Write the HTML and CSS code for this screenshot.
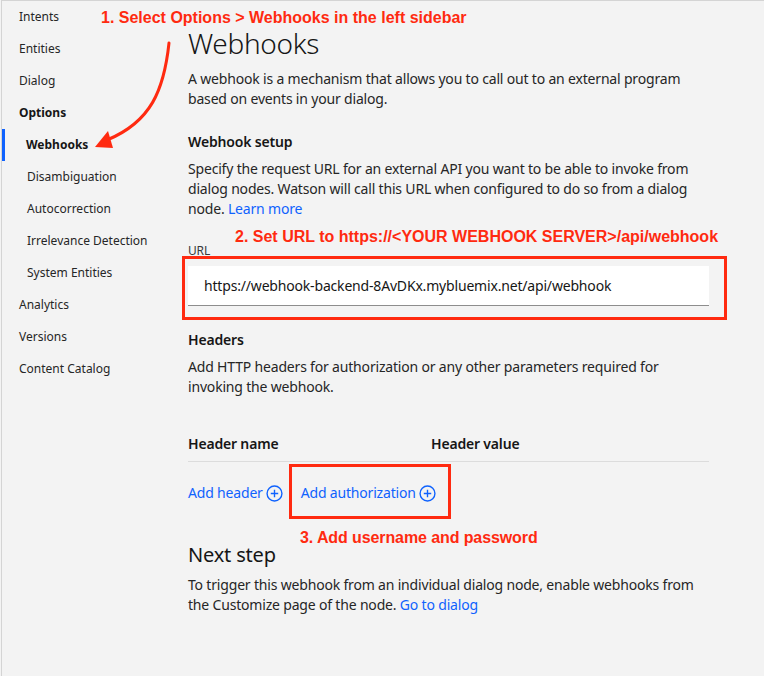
FILE: index.html
```html
<!DOCTYPE html>
<html lang="en">
<head>
<meta charset="utf-8">
<title>Webhooks</title>
<link rel="stylesheet" href="styles.css">
</head>
<body>
<div class="page">
  <nav class="sidebar">
    <div class="nav-item">Intents</div>
    <div class="nav-item">Entities</div>
    <div class="nav-item">Dialog</div>
    <div class="nav-item nav-bold">Options</div>
    <div class="nav-item nav-sub nav-active">Webhooks</div>
    <div class="nav-item nav-sub">Disambiguation</div>
    <div class="nav-item nav-sub">Autocorrection</div>
    <div class="nav-item nav-sub">Irrelevance Detection</div>
    <div class="nav-item nav-sub">System Entities</div>
    <div class="nav-item">Analytics</div>
    <div class="nav-item">Versions</div>
    <div class="nav-item">Content Catalog</div>
  </nav>
  <main class="main">
    <h1 class="title">Webhooks</h1>
    <p class="text intro">A webhook is a mechanism that allows you to call out to an external program<br>based on events in your dialog.</p>
    <h2 class="subhead setup-head">Webhook setup</h2>
    <p class="text">Specify the request URL for an external API you want to be able to invoke from<br>dialog nodes. Watson will call this URL when configured to do so from a dialog<br>node. <a class="link">Learn more</a></p>
    <label class="label">URL</label>
    <div class="input">https://webhook-backend-8AvDKx.mybluemix.net/api/webhook</div>
    <h2 class="subhead headers-head">Headers</h2>
    <p class="text">Add HTTP headers for authorization or any other parameters required for<br>invoking the webhook.</p>
    <div class="table-head">
      <span class="col-name">Header name</span>
      <span class="col-value">Header value</span>
    </div>
    <div class="actions">
      <a class="link action">Add header <svg class="plus" viewBox="0 0 16 16"><circle cx="8" cy="8" r="7" fill="none" stroke="currentColor" stroke-width="1.3"/><path d="M8 4.5v7M4.5 8h7" stroke="currentColor" stroke-width="1.3"/></svg></a>
      <a class="link action">Add authorization <svg class="plus" viewBox="0 0 16 16"><circle cx="8" cy="8" r="7" fill="none" stroke="currentColor" stroke-width="1.3"/><path d="M8 4.5v7M4.5 8h7" stroke="currentColor" stroke-width="1.3"/></svg></a>
    </div>
    <h2 class="next-head">Next step</h2>
    <p class="text next-text">To trigger this webhook from an individual dialog node, enable webhooks from<br>the Customize page of the node. <a class="link">Go to dialog</a></p>
  </main>

  <div class="note note-1">1. Select Options &gt; Webhooks in the left sidebar</div>
  <div class="note note-2">2. Set URL to https://&lt;YOUR WEBHOOK SERVER&gt;/api/webhook</div>
  <div class="note note-3">3. Add username and password</div>
  <div class="box box-url"></div>
  <div class="box box-auth"></div>
  <svg class="arrow" width="200" height="160" viewBox="0 0 200 160">
    <path d="M168 43 C163 90 150 122 106 140" fill="none" stroke="#ff2a10" stroke-width="3" stroke-linecap="round"/>
    <polygon points="94,147 107,131 112,148" fill="#ff2a10"/>
  </svg>
</div>
</body>
</html>
```

FILE: styles.css
```css
* { box-sizing: border-box; }
html, body { margin: 0; padding: 0; }
body {
  background: #f3f3f3;
  font-family: "Noto Sans", "Open Sans", sans-serif;
  color: #161616;
}
.page {
  position: relative;
  display: flex;
  width: 764px;
  height: 676px;
  border-top: 1px solid #d4d4d4;
  border-left: 1px solid #d4d4d4;
  margin-left: 1px;
  overflow: hidden;
}
.sidebar {
  width: 186px;
  flex: none;
}
.nav-item {
  height: 32px;
  line-height: 32px;
  font-size: 12px;
  padding-left: 17px;
  color: #262626;
}
.nav-bold { font-weight: 700; color: #161616; }
.nav-sub { padding-left: 25px; }
.nav-active {
  font-weight: 700;
  color: #161616;
  border-left: 3px solid #0f62fe;
  padding-left: 21px;
}
.main {
  flex: none;
  width: 540px;
  padding-top: 24px;
  letter-spacing: -0.18px;
}
.title {
  margin: 0;
  font-size: 28px;
  line-height: 36px;
  font-weight: 300;
  letter-spacing: -0.3px;
}
.text {
  margin: 0;
  font-size: 14px;
  line-height: 20px;
  color: #262626;
}
.intro { margin-top: 8px; }
.subhead {
  margin: 0;
  font-size: 14px;
  line-height: 20px;
  font-weight: 600;
}
.setup-head { margin-top: 23px; margin-bottom: 7px; }
.headers-head { margin-top: 24px; margin-bottom: 7px; }
.link { color: #0f62fe; text-decoration: none; }
.label {
  display: block;
  margin-top: 24px;
  font-size: 12px;
  line-height: 16px;
  color: #393939;
}
.input {
  margin-top: 7px;
  width: 521px;
  height: 40px;
  background: #fff;
  border-bottom: 1px solid #8d8d8d;
  padding-left: 16px;
  line-height: 40px;
  font-size: 14px;
  color: #161616;
}
.table-head {
  display: flex;
  margin-top: 30px;
  width: 521px;
  height: 35px;
  line-height: 34px;
  font-size: 14px;
  font-weight: 600;
  border-bottom: 1px solid #dcdcdc;
}
.col-name { width: 243px; }
.actions {
  display: flex;
  gap: 18px;
  margin-top: 21px;
  height: 20px;
  line-height: 20px;
  font-size: 14px;
}
.action { display: flex; align-items: center; gap: 3px; }
.plus { width: 17px; height: 17px; }
.next-head {
  margin: 38px 0 0;
  font-size: 20px;
  line-height: 28px;
  font-weight: 400;
}
.next-text { margin-top: 6px; }

.note {
  position: absolute;
  font-family: "Liberation Sans", Arial, sans-serif;
  font-weight: 700;
  font-size: 16px;
  line-height: 18px;
  color: #ff2a10;
  white-space: nowrap;
}
.note-1 { left: 99px; top: 8px; }
.note-2 { left: 233px; top: 227px; }
.note-3 { left: 298px; top: 528px; letter-spacing: -0.1px; }
.box {
  position: absolute;
  border: 3px solid #ff2a10;
}
.box-url { left: 180px; top: 255px; width: 545px; height: 64px; }
.box-auth { left: 287px; top: 463px; width: 162px; height: 55px; }
.arrow { position: absolute; left: -1px; top: -1px; }
```
